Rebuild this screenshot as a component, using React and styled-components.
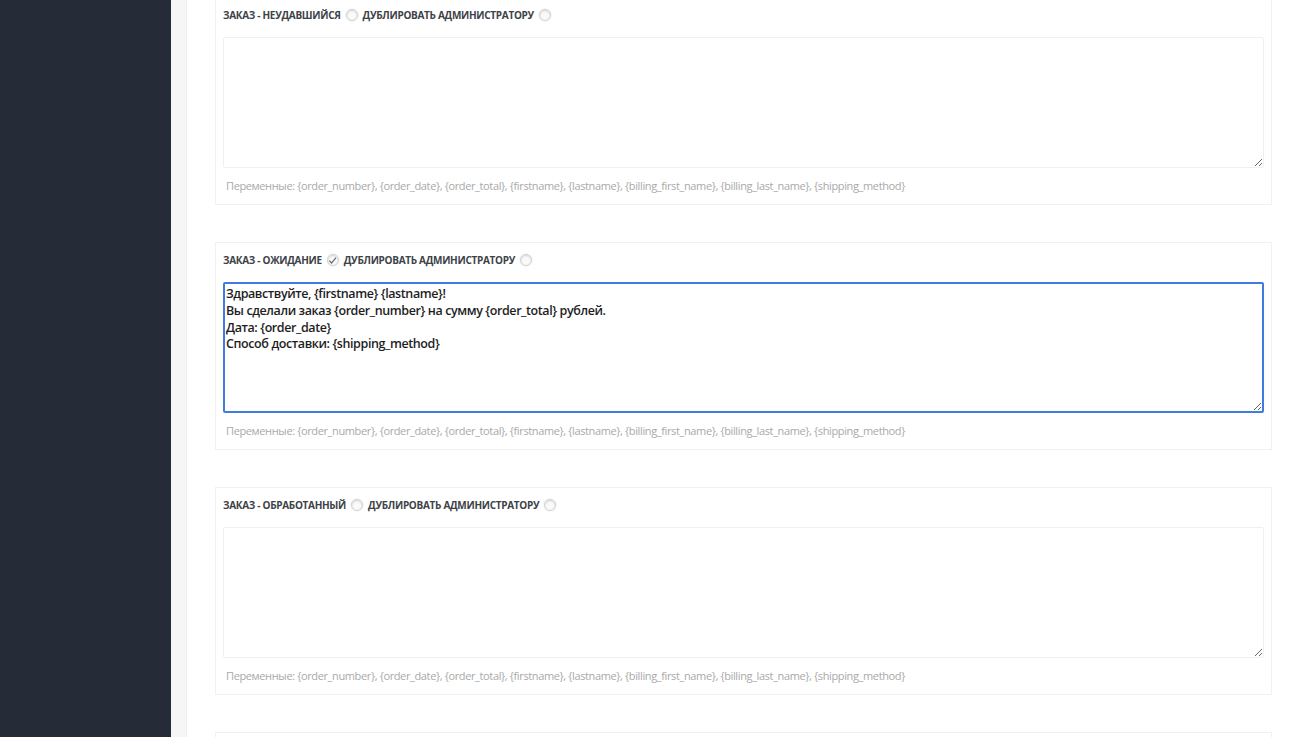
import React from 'react'
import styled, { createGlobalStyle } from 'styled-components'

const GlobalStyle = createGlobalStyle`
  html, body {
    margin: 0;
    padding: 0;
    height: 100%;
    overflow: hidden;
    background: #fff;
  }
  body {
    font-family: 'Open Sans', 'Noto Sans', sans-serif;
  }
`

const Layout = styled.div`
  display: flex;
  height: 737px;
  overflow: hidden;
`

const Sidebar = styled.aside`
  width: 171px;
  flex-shrink: 0;
  background: #252c37;
`

const Gutter = styled.div`
  width: 15px;
  flex-shrink: 0;
  background: #f6f6f6;
  border-right: 1px solid #efefef;
`

const Content = styled.main`
  flex: 1;
  padding: 0 28px 0 28px;
`

const List = styled.div`
  display: flex;
  flex-direction: column;
  gap: 37px;
  margin-top: -3px;
`

const Card = styled.section`
  border: 1px solid #f1f1f1;
  padding: 9px 7px 10px 7px;
  background: #fff;
  min-height: 20px;
`

const Header = styled.div`
  display: flex;
  align-items: center;
  gap: 5px;
  height: 16px;
  margin-bottom: 14px;
`

const Label = styled.span`
  font-size: 10px;
  font-weight: 700;
  color: #3d4247;
  text-transform: uppercase;
  letter-spacing: -0.3px;
`

const Toggle = styled.span`
  box-sizing: border-box;
  width: 12px;
  height: 12px;
  border-radius: 50%;
  border: 1px solid #d4d4d4;
  box-shadow: inset 0 1px 2px rgba(0, 0, 0, 0.15), 0 0 2px rgba(0, 0, 0, 0.12);
  background: #fafafa;
  display: inline-flex;
  align-items: center;
  justify-content: center;
  flex-shrink: 0;
  svg {
    display: ${p => (p.$checked ? 'block' : 'none')};
  }
`

const Editor = styled.textarea`
  display: block;
  box-sizing: border-box;
  width: 100%;
  height: 131px;
  margin: 0;
  padding: 2px 1px;
  resize: vertical;
  font-family: 'Open Sans', 'Noto Sans', sans-serif;
  font-size: 12.5px;
  font-weight: 600;
  letter-spacing: -0.4px;
  line-height: 16.8px;
  color: #1e1e1e;
  border: ${p => (p.$active ? '2px solid #3f7be0' : '1px solid #f0f0f0')};
  border-radius: 2px;
  outline: none;
  background: #fff;
`

const Vars = styled.p`
  margin: 10px 0 0 3px;
  font-size: 11px;
  letter-spacing: -0.37px;
  color: #a9a9a9;
  line-height: 16px;
`

const VARS =
  'Переменные: {order_number}, {order_date}, {order_total}, {firstname}, {lastname}, {billing_first_name}, {billing_last_name}, {shipping_method}'

const Check = () => (
  <svg width="9" height="9" viewBox="0 0 10 10">
    <path d="M1.5 5.2 L4 7.8 L8.8 1.8" fill="none" stroke="#666" strokeWidth="1.3" />
  </svg>
)

function StatusCard({ title, checked, active, text }) {
  return (
    <Card>
      <Header>
        <Label>{title}</Label>
        <Toggle $checked={checked}><Check /></Toggle>
        <Label>Дублировать администратору</Label>
        <Toggle><Check /></Toggle>
      </Header>
      <Editor $active={active} defaultValue={text} spellCheck={false} />
      <Vars>{VARS}</Vars>
    </Card>
  )
}

const greeting =
  'Здравствуйте, {firstname} {lastname}!\nВы сделали заказ {order_number} на сумму {order_total} рублей.\nДата: {order_date}\nСпособ доставки: {shipping_method}'

export default function App() {
  return (
    <>
      <GlobalStyle />
      <Layout>
        <Sidebar />
        <Gutter />
        <Content>
          <List>
            <StatusCard title="Заказ - неудавшийся" text="" />
            <StatusCard title="Заказ - ожидание" checked active text={greeting} />
            <StatusCard title="Заказ - обработанный" text="" />
            <Card />
          </List>
        </Content>
      </Layout>
    </>
  )
}
